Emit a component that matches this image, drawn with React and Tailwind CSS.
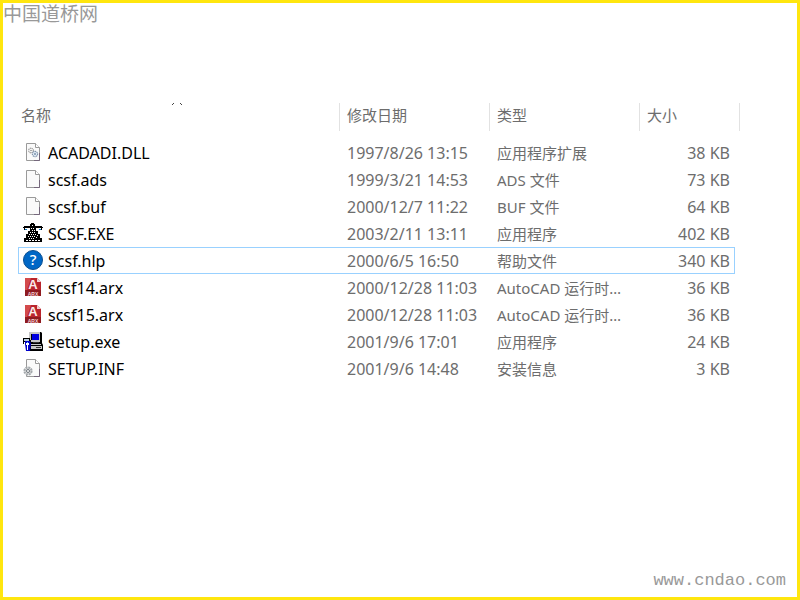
const files = [
  { name: "ACADADI.DLL", date: "1997/8/26 13:15", type: "应用程序扩展", size: "38 KB", icon: "dll" },
  { name: "scsf.ads", date: "1999/3/21 14:53", type: "ADS 文件", size: "73 KB", icon: "file" },
  { name: "scsf.buf", date: "2000/12/7 11:22", type: "BUF 文件", size: "64 KB", icon: "file" },
  { name: "SCSF.EXE", date: "2003/2/11 13:11", type: "应用程序", size: "402 KB", icon: "tower" },
  { name: "Scsf.hlp", date: "2000/6/5 16:50", type: "帮助文件", size: "340 KB", icon: "help", selected: true },
  { name: "scsf14.arx", date: "2000/12/28 11:03", type: "AutoCAD 运行时扩展", size: "36 KB", icon: "arx" },
  { name: "scsf15.arx", date: "2000/12/28 11:03", type: "AutoCAD 运行时扩展", size: "36 KB", icon: "arx" },
  { name: "setup.exe", date: "2001/9/6 17:01", type: "应用程序", size: "24 KB", icon: "setup" },
  { name: "SETUP.INF", date: "2001/9/6 14:48", type: "安装信息", size: "3 KB", icon: "inf" },
];

function Page() {
  return (
    <>
      <path d="M3.5 1.5h9l4 4v13h-13z" fill="#fafafa" stroke="#9a9a9a" />
      <path d="M12.5 1.5v4h4" fill="#fff" stroke="#9a9a9a" />
      <path d="M16.5 11v7.5H11" fill="none" stroke="#75677c" />
    </>
  );
}

function FileIcon({ kind }) {
  return (
    <svg viewBox="0 0 20 20" className="mb-0.5 h-5 w-5 shrink-0" aria-hidden="true">
      {kind === "file" && <Page />}

      {kind === "dll" && (
        <>
          <Page />
          <circle cx="8" cy="8.5" r="2.3" fill="#fff" stroke="#999" strokeWidth="1.2" strokeDasharray="1.2 .5" />
          <circle cx="8" cy="8.5" r=".8" fill="#888" />
          <circle cx="12" cy="12" r="2.6" fill="#e4eef8" stroke="#8093aa" strokeWidth="1.2" strokeDasharray="1.2 .5" />
          <circle cx="12" cy="12" r=".9" fill="#7189a5" />
        </>
      )}

      {kind === "tower" && (
        <>
          <path
            d="M8 0h3v1h1v2h7v1h1v1h-1v2h-1V5h-5v3h2v3h2v4h2v4H1v-4h2v-4h2V8h2V5H2v2H1V5H0V4h1V3h6V1h1z"
            fill="#000"
          />
          <path d="M2 6h2v1H2zM16 6h2v1h-2z" fill="#0b78c8" />
          <path
            d="M9 2h1v1H9zM8 5h1v1H8zM10 5h1v1h-1zM9 7h1v1H9zM11 7h1v1h-1zM7 9h1v1H7zM9 9h1v1H9zM11 9h1v1h-1zM6 11h1v1H6zM8 11h1v1H8zM10 11h1v1h-1zM12 11h1v1h-1zM14 12h1v1h-1zM5 13h1v1H5zM7 13h1v1H7zM9 13h1v1H9zM11 13h1v1h-1zM13 14h1v1h-1zM6 15h1v1H6zM8 15h1v1H8zM10 15h1v1h-1zM3 17h2v1H3zM6 17h2v1H6zM9 17h2v1H9zM12 17h2v1h-2zM15 17h2v1h-2z"
            fill="#fff"
          />
        </>
      )}

      {kind === "help" && (
        <>
          <circle cx="10" cy="10" r="9.5" fill="#0067c6" stroke="#0b4f91" />
          <text
            x="10"
            y="15"
            textAnchor="middle"
            className="fill-white font-['Noto_Sans',sans-serif] text-[15px] font-medium"
          >
            ?
          </text>
        </>
      )}

      {kind === "arx" && (
        <>
          <path d="M2 1h12l4 4v14H2z" fill="#b9242c" />
          <path d="M14 1v4h4z" fill="#f0cfcf" />
          <path d="M2 1h6L4 13H2z" fill="#d34a4c" />
          <text
            x="10"
            y="12"
            textAnchor="middle"
            className="fill-[#fbe9e9] font-['Liberation_Sans',sans-serif] text-[13px] font-bold"
          >
            A
          </text>
          <path d="M2 13h16v6H2z" fill="#8f1a20" />
          <text
            x="10"
            y="19"
            textAnchor="middle"
            className="fill-[#f4d4d4] font-['Liberation_Sans',sans-serif] text-[5px] font-bold"
          >
            ARX
          </text>
        </>
      )}

      {kind === "setup" && (
        <>
          <path d="M6 1h12l1 1v10H7V9H6z" fill="#000" />
          <path d="M6 1h11v10H6z" fill="#c6c6c6" />
          <path d="M8 3h8v6H8z" fill="#000" />
          <path d="M9 3h7v6H9z" fill="#0000e0" />
          <path d="M7 12h12l1 2v6H7z" fill="#000" />
          <path d="M8 13h10v1H8zM8 15h11v3H8z" fill="#c6c6c6" />
          <path d="M13 16h5v1h-5zM10 11h6v1h-6z" fill="#333" />
          <path d="M0 7h7v2h1v3H6v-1H1v2H0z" fill="#000" />
          <path d="M1 8h5v2H1z" fill="#bcd" />
          <path d="M2 10h5l1 3-1 7H3l-1-7z" fill="#0000c8" />
          <path d="M3 12h3v2H5v5H4v-5H3z" fill="#fff" />
          <path d="M4 11h1v1H4z" fill="#6cf" />
        </>
      )}

      {kind === "inf" && (
        <>
          <Page />
          <circle cx="5" cy="13" r="3.6" fill="#dedede" stroke="#a3a8ac" strokeWidth="2" strokeDasharray="2 .8" />
          <circle cx="5" cy="13" r="1.5" fill="#fff" stroke="#6f777e" />
        </>
      )}
    </svg>
  );
}

function HeaderCell({ children, span }) {
  return (
    <th
      scope="col"
      colSpan={span}
      className="h-7 border-r border-[#e2e2e2] p-0 pl-[7px] text-left align-top leading-6 font-normal"
    >
      {children}
    </th>
  );
}

function FileRow({ file }) {
  const line = file.selected ? "border-[#99d1ff]" : "border-transparent";

  return (
    <tr className="h-[27px]">
      <td className={`border-y border-l p-0 pl-1 text-[16px] text-black ${line}`}>
        <div className="flex items-center gap-[5px]">
          <FileIcon kind={file.icon} />
          <span>{file.name}</span>
        </div>
      </td>
      <td className={`border-y p-0 pl-[7px] text-[16px] ${line}`}>{file.date}</td>
      <td className={`truncate border-y p-0 pr-3 pl-[7px] ${line}`}>{file.type}</td>
      <td className={`border-y border-r p-0 pr-1 text-right text-[16px] ${line}`}>{file.size}</td>
      <td className="p-0" />
    </tr>
  );
}

export default function App() {
  return (
    <div className="flex min-h-screen flex-col border-3 border-[#ffe60f] bg-white font-['Noto_Sans','Noto_Sans_CJK_SC',sans-serif] text-[15px] leading-5 text-[#6d6d6d]">
      <header className="h-[100px] font-['Noto_Sans_CJK_SC',sans-serif] text-[19px] text-[#999]">
        中国道桥网
      </header>

      <main className="pr-[57px] pl-[15px]">
        <table className="w-full table-fixed border-separate border-spacing-0">
          <colgroup>
            <col />
            <col className="w-[150px]" />
            <col className="w-[150px]" />
            <col className="w-[95px]" />
            <col className="w-[5px]" />
          </colgroup>
          <thead>
            <tr>
              <th
                scope="col"
                className="relative h-7 border-r border-[#e2e2e2] p-0 pl-[3px] text-left align-top leading-6 font-normal"
              >
                名称
                <svg
                  viewBox="0 0 10 3"
                  className="absolute top-0 left-1/2 h-[3px] w-[10px] -translate-x-1.5"
                  aria-hidden="true"
                >
                  <path d="M0 2 2 0M8 0l2 2" stroke="#444" />
                </svg>
              </th>
              <HeaderCell>修改日期</HeaderCell>
              <HeaderCell>类型</HeaderCell>
              <HeaderCell span={2}>大小</HeaderCell>
            </tr>
          </thead>
          <tbody>
            <tr className="h-2" aria-hidden="true">
              <td colSpan={5} className="p-0" />
            </tr>
            {files.map((file) => (
              <FileRow key={file.name} file={file} />
            ))}
          </tbody>
        </table>
      </main>

      <footer className="mt-auto flex justify-end pr-[11px] pb-1">
        <a href="#" className="font-['Liberation_Mono',monospace] text-[17px] leading-6 text-[#999]">
          www.cndao.com
        </a>
      </footer>
    </div>
  );
}
